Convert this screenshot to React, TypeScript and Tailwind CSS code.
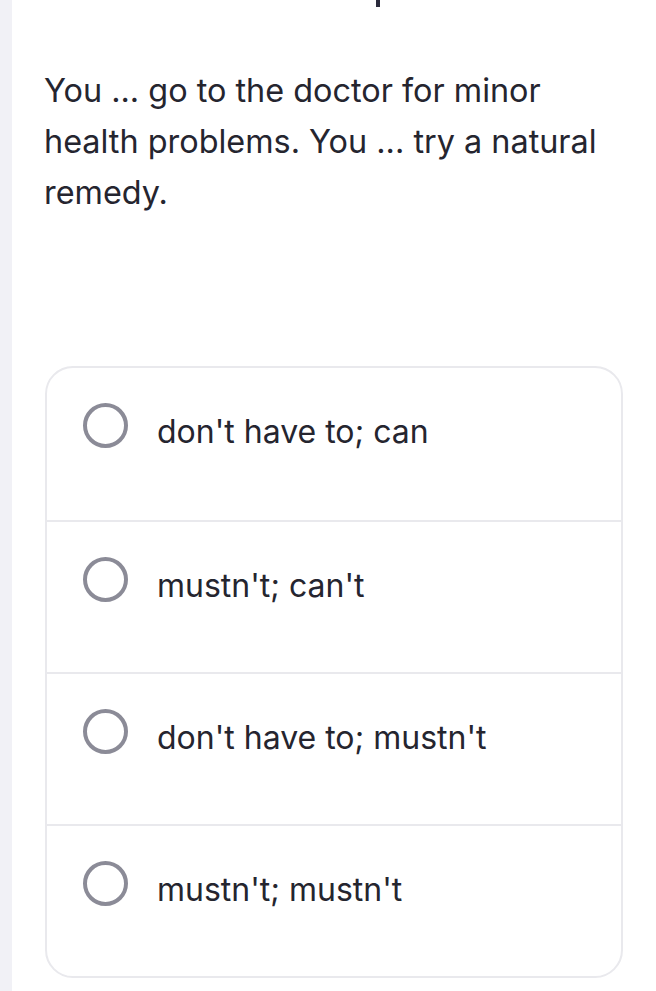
import React from 'react';

const options = [
  "don't have to; can",
  "mustn't; can't",
  "don't have to; mustn't",
  "mustn't; mustn't",
];

function Radio() {
  return <span className="block w-[45px] h-[45px] shrink-0 rounded-full border-[4px] border-[#8b8b97]" />;
}

export default function App() {
  return (
    <div
      className="flex w-[656px] h-[991px] bg-white overflow-hidden text-[#25252f]"
      style={{ fontFamily: 'Inter, "Noto Sans", sans-serif' }}
    >
      <div className="w-[12px] shrink-0 bg-[#f1f1f6]" />
      <div className="relative flex-1 pl-[32px] pr-[33px] pt-[65px]">
        <span className="absolute left-[364px] top-0 w-[4px] h-[7px] bg-[#2a2a3c]" />
        <p className="text-[32.4px] leading-[51px] pr-[8px]">
          You ... go to the doctor for minor health problems. You ... try a natural remedy.
        </p>
        <div className="mt-[148px] ml-[1px] rounded-[28px] border-2 border-[#e9e9ed] overflow-hidden">
          {options.map((opt, i) => (
            <div
              key={i}
              className={
                'flex items-start h-[152px] pl-[36px] pt-[35px] gap-[29px] ' +
                (i > 0 ? 'border-t-2 border-[#e9e9ed]' : '')
              }
            >
              <Radio />
              <span className="mt-[13px] text-[32px] leading-none">{opt}</span>
            </div>
          ))}
        </div>
      </div>
    </div>
  );
}
